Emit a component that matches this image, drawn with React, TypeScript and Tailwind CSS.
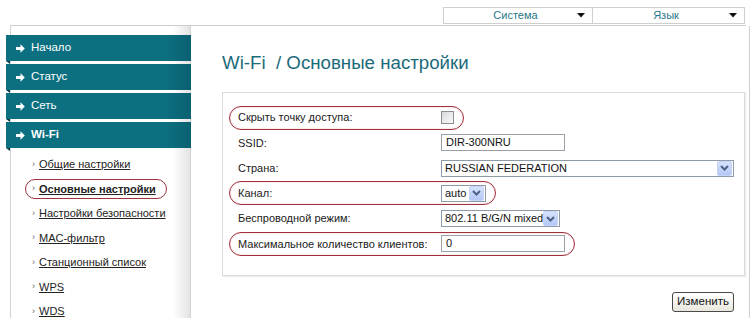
import type { ReactNode } from "react";

const tabs = ["Начало", "Статус", "Сеть", "Wi-Fi"];
const subs = [
  "Общие настройки",
  "Основные настройки",
  "Настройки безопасности",
  "MAC-фильтр",
  "Станционный список",
  "WPS",
  "WDS",
];

function TabArrow() {
  return (
    <svg width="9" height="9" viewBox="0 0 9 9" className="shrink-0">
      <polygon points="0,3 4.5,3 4.5,0.3 8.8,4.5 4.5,8.7 4.5,6 0,6" fill="#fff" />
    </svg>
  );
}

function DownTri() {
  return (
    <svg width="8" height="5" viewBox="0 0 8 5">
      <polygon points="0,0 8,0 4,4.5" fill="#111" />
    </svg>
  );
}

function SelBtn() {
  return (
    <span className="w-[15px] h-[15px] mr-[1px] rounded-[2px] bg-[linear-gradient(#d6e2fd,#b3c8f7)] border border-[#c4d3f6] flex items-center justify-center shrink-0">
      <svg width="9" height="6" viewBox="0 0 9 6">
        <polyline points="1,1 4.5,4.5 8,1" fill="none" stroke="#4d6185" strokeWidth="2" />
      </svg>
    </span>
  );
}

function Select({ value, w }: { value: string; w: string }) {
  return (
    <div className={`${w} h-[17px] border border-[#8e9aa6] bg-white flex items-center`}>
      <span className="flex-1 pl-[3px] text-[11px] leading-none text-[#111] whitespace-nowrap">{value}</span>
      <SelBtn />
    </div>
  );
}

function Input({ value }: { value: string }) {
  return (
    <div className="w-[124px] h-[17px] border border-[#9aa0a6] bg-white flex items-center pl-[4px] text-[11px] leading-none text-[#111]">
      {value}
    </div>
  );
}

function Row({ label, hl, children }: { label: string; hl?: boolean; children: ReactNode }) {
  return (
    <div className="h-[25.25px] flex items-center pl-[6px]">
      <div
        className={`inline-flex items-center h-[24px] pr-[9px] rounded-full border ${
          hl ? "border-[#a0313c] shadow-[inset_0_0_2px_#f3b9bf]" : "border-transparent"
        }`}
      >
        <span className="w-[211px] pl-[8px] text-[11px] text-[#1a1a1a] whitespace-nowrap">{label}</span>
        {children}
      </div>
    </div>
  );
}

export default function App() {
  return (
    <div className="w-[753px] h-[318px] bg-white overflow-hidden font-['Liberation_Sans',Arial,sans-serif]">
      {/* top menus */}
      <div className="h-[25px] flex justify-end pr-[8px] pt-[7px]">
        <div className="flex h-[17px] border border-[#cfcfcf] text-[11px] text-[#2a7888]">
          <div className="w-[149px] flex items-center border-r border-[#cfcfcf] pl-[10px] pr-[7px]">
            <span className="flex-1 text-center">Система</span>
            <DownTri />
          </div>
          <div className="w-[151px] flex items-center pl-[10px] pr-[7px]">
            <span className="flex-1 text-center">Язык</span>
            <DownTri />
          </div>
        </div>
      </div>

      <div className="flex ml-[10px] mr-[7px] h-[293px] border-t border-[#cdcdcd]">
        {/* sidebar */}
        <div className="w-[181px] shrink-0 border-l border-r border-[#d2d2d2] bg-[linear-gradient(to_right,#fff_90%,#e4e4e4)] pt-[9px]">
          <div className="flex flex-col gap-[3px] -ml-[5px]">
            {tabs.map((t, i) => (
              <div
                key={t}
                className="relative h-[26px] w-[185px] bg-[linear-gradient(to_right,#0d7081_85%,#0a6171)] flex items-center pl-[10px] gap-[6px] text-[11.5px] text-white"
              >
                <TabArrow />
                <span className={i === 3 ? "font-bold" : ""}>{t}</span>
                <span className="absolute left-0 top-full w-0 h-0 border-l-[4px] border-l-transparent border-t-[3px] border-t-[#053c46]" />
              </div>
            ))}
          </div>
          <div className="mt-[4px]">
            {subs.map((s, i) => (
              <div key={s} className="h-[24.5px] flex items-center pl-[14px]">
                <span
                  className={`inline-flex items-center h-[20px] pl-[6px] pr-[10px] rounded-full border ${
                    i === 1 ? "border-[#a0313c]" : "border-transparent"
                  }`}
                >
                  <span className="text-[9px] text-[#666] mr-[4px]">›</span>
                  <span className={`text-[#222] underline ${i === 1 ? "font-bold text-[11px]" : "text-[11px]"}`}>{s}</span>
                </span>
              </div>
            ))}
          </div>
        </div>

        {/* content */}
        <div className="flex-1 border-r border-[#cfcfcf] pl-[31px] pr-[4px]">
          <h1 className="mt-[26px] h-[22px] leading-[22px] text-[18.7px] text-[#1b6a7a] whitespace-pre">
            Wi-Fi  / Основные настройки
          </h1>
          <div className="mt-[18px] h-[184px] border border-[#dcdcdc] shadow-[1px_1px_1px_#ececec] pt-[12px]">
            <Row label="Скрыть точку доступа:" hl>
              <span className="w-[13px] h-[13px] border border-[#8a8f94] bg-[linear-gradient(135deg,#d8dadc,#fafafa)]" />
            </Row>
            <Row label="SSID:">
              <Input value="DIR-300NRU" />
            </Row>
            <Row label="Страна:">
              <Select value="RUSSIAN FEDERATION" w="w-[293px]" />
            </Row>
            <Row label="Канал:" hl>
              <Select value="auto" w="w-[45px]" />
            </Row>
            <Row label="Беспроводной режим:">
              <Select value="802.11 B/G/N mixed" w="w-[119px]" />
            </Row>
            <Row label="Максимальное количество клиентов:" hl>
              <Input value="0" />
            </Row>
          </div>
          <div className="flex justify-end pr-[11px] mt-[16px]">
            <button className="w-[62px] h-[20px] rounded-[3px] border border-[#4a4a4a] bg-[linear-gradient(#ffffff,#e9e7dc)] text-[11.5px] text-[#111] leading-none">
              Изменить
            </button>
          </div>
        </div>
      </div>
    </div>
  );
}
